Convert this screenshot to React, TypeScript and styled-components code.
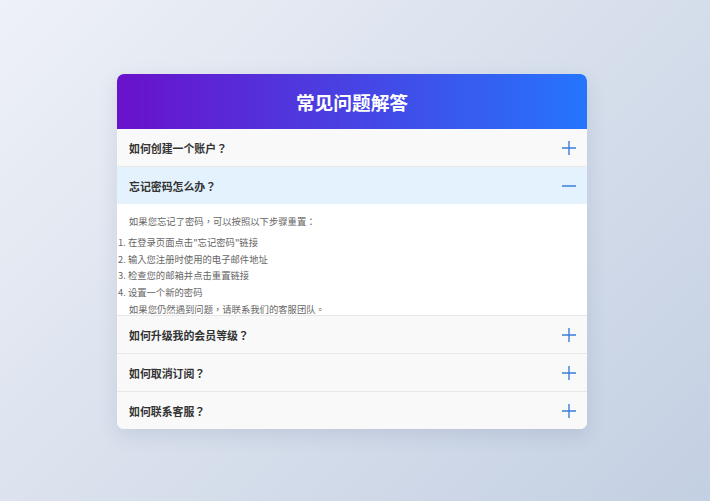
import { useState } from "react";
import styled, { createGlobalStyle } from "styled-components";

const GlobalStyle = createGlobalStyle`
  html, body {
    margin: 0;
    padding: 0;
  }
  body {
    font-family: "Noto Sans CJK TC", "Noto Sans CJK SC", "Noto Sans", sans-serif;
  }
`;

const Page = styled.div`
  width: 710px;
  height: 501px;
  box-sizing: border-box;
  padding: 74px 6px 0 0;
  background: linear-gradient(135deg, #eef1f7 0%, #c3cfe2 100%);
  display: flex;
  justify-content: center;
  align-items: flex-start;
`;

const Card = styled.div`
  width: 470px;
  background: #fff;
  border-radius: 7px;
  overflow: hidden;
  box-shadow: 0 6px 20px rgba(40, 60, 110, 0.12);
`;

const Header = styled.div`
  height: 55px;
  display: flex;
  align-items: center;
  justify-content: center;
  background: linear-gradient(90deg, #6a11cb 0%, #2575fc 100%);
  color: #fff;
  font-size: 18.7px;
  font-weight: 700;
`;

const Item = styled.div`
  border-bottom: 1px solid #e8e8e8;
  &:last-child {
    border-bottom: none;
  }
`;

const Question = styled.div<{ $open: boolean }>`
  height: 37px;
  box-sizing: border-box;
  padding: 0 10px 0 12px;
  display: flex;
  align-items: center;
  justify-content: space-between;
  background: ${(p) => (p.$open ? "#e3f2fd" : "#f9f9f9")};
  color: #333;
  font-size: 10.9px;
  font-weight: 700;
  cursor: pointer;
`;

const Answer = styled.div`
  max-height: 111px;
  overflow: hidden;
  box-sizing: border-box;
  padding: 9px 12px 0;
  background: #fff;
  color: #666;
  font-size: 9.33px;
  line-height: 16.8px;
  p {
    margin: 0;
  }
  p:first-child {
    margin-bottom: 4px;
  }
  ol {
    margin: 0 0 0 -11px;
    padding: 0;
    list-style-position: inside;
  }
`;

const Icon = ({ open }: { open: boolean }) => (
  <svg width="16" height="16" viewBox="0 0 16 16">
    <path
      d={open ? "M1 8h14" : "M1 8h14M8 1v14"}
      stroke="#3b7ddd"
      strokeWidth="1.4"
      fill="none"
    />
  </svg>
);

const faqs = [
  { q: "如何创建一个账户？" },
  {
    q: "忘记密码怎么办？",
    a: (
      <>
        <p>如果您忘记了密码，可以按照以下步骤重置：</p>
        <ol>
          <li>在登录页面点击"忘记密码"链接</li>
          <li>输入您注册时使用的电子邮件地址</li>
          <li>检查您的邮箱并点击重置链接</li>
          <li>设置一个新的密码</li>
        </ol>
        <p>如果您仍然遇到问题，请联系我们的客服团队。</p>
      </>
    ),
  },
  { q: "如何升级我的会员等级？" },
  { q: "如何取消订阅？" },
  { q: "如何联系客服？" },
];

export default function App() {
  const [open, setOpen] = useState(1);
  return (
    <>
      <GlobalStyle />
      <Page>
        <Card>
          <Header>常见问题解答</Header>
          {faqs.map((f, i) => (
            <Item key={f.q}>
              <Question $open={open === i} onClick={() => setOpen(open === i ? -1 : i)}>
                {f.q}
                <Icon open={open === i} />
              </Question>
              {open === i && f.a && <Answer>{f.a}</Answer>}
            </Item>
          ))}
        </Card>
      </Page>
    </>
  );
}
